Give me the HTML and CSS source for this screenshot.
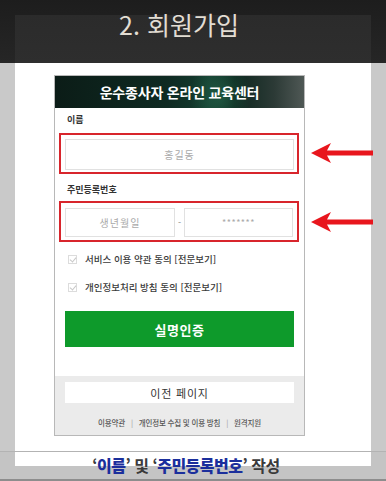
FILE: index.html
```html
<!DOCTYPE html>
<html lang="ko">
<head>
  <meta charset="UTF-8" />
  <meta name="viewport" content="width=device-width, initial-scale=1" />
  <title>2. 회원가입</title>
  <link rel="stylesheet" href="styles.css">
</head>

<body>
  <!-- TITLE BAR -->
  <header class="topbar">
    <h1>2. 회원가입</h1>
  </header>

  <!-- SCREENSHOT SHEET -->
  <main class="sheet">
    <div class="card">
      <div class="card-head">운수종사자 온라인 교육센터</div>

      <form class="card-body">
        <label class="field-label">이름</label>
        <div class="mark">
          <input class="field" type="text" placeholder="홍길동">
        </div>

        <label class="field-label">주민등록번호</label>
        <div class="mark mark-split">
          <input class="field" type="text" placeholder="생년월일">
          <span class="dash">-</span>
          <input class="field field-stars" type="text" placeholder="*******">
        </div>

        <div class="agree"><span class="check"></span>서비스 이용 약관 동의 [전문보기]</div>
        <div class="agree"><span class="check"></span>개인정보처리 방침 동의 [전문보기]</div>

        <button class="btn-verify" type="button">실명인증</button>
      </form>

      <div class="card-foot">
        <button class="btn-prev" type="button">이전 페이지</button>
        <p class="links">이용약관<span class="sep">|</span>개인정보 수집 및 이용 방침<span class="sep">|</span>원격지원</p>
      </div>
    </div>

    <!-- red pointer arrows (drawn over the sheet) -->
    <svg class="arrow arrow-name" width="62" height="20" viewBox="0 0 62 20">
      <polygon points="0,10 20,0 16,7.5 62,7.5 62,12.5 16,12.5 20,20" />
    </svg>
    <svg class="arrow arrow-rrn" width="62" height="20" viewBox="0 0 62 20">
      <polygon points="0,10 20,0 16,7.5 62,7.5 62,12.5 16,12.5 20,20" />
    </svg>
  </main>

  <!-- CAPTION -->
  <footer class="caption">
    <p>‘<b>이름</b>’ 및 ‘<b>주민등록번호</b>’ 작성</p>
  </footer>
</body>
</html>
```

FILE: styles.css
```css
/* ———————————————— */
/* BASE */
/* ———————————————— */
html, body { height: 100%; }
body {
  margin: 0;
  overflow: hidden;
  background: #c9c9c9;
  font-family: "Noto Sans CJK KR", "Noto Sans", sans-serif;
  color: #333;
}

/* ———————————————— */
/* TITLE BAR */
/* ———————————————— */
.topbar {
  height: 63px;
  background:
    linear-gradient(#2b2b2b, #2e2e2e) 15px 15px / 356px 48px no-repeat,
    linear-gradient(#1d1d1d, #262626);
}
.topbar h1 {
  margin: 0;
  padding: 6px 28px 0 0;
  text-align: center;
  font-size: 25px;
  font-weight: 400;
  line-height: 36px;
  color: #e2ddd3;
}

/* ———————————————— */
/* SHEET + CARD */
/* ———————————————— */
.sheet {
  position: relative;
  margin: 0 15px;
  height: 376px;
  padding-top: 12px;
  background: #fff;
}
.card {
  width: 249px;
  margin-left: 39px;
  border: 1px solid #b8b8b8;
}
.card-head {
  height: 32px;
  line-height: 32px;
  text-align: center;
  font-size: 14px;
  font-weight: 700;
  letter-spacing: -0.2px;
  color: #fff;
  background:
    radial-gradient(ellipse 30px 40px at 165px 20px, rgba(40,110,80,0.6), transparent),
    linear-gradient(90deg, #0b1c17 0%, #0f2a22 45%, #143d30 62%, #0c261e 72%, #2c3a36 88%, #4f5855 100%);
}

.card-body {
  padding: 5px 5px 29px 4px;
  margin: 0;
}
.field-label {
  display: block;
  padding-left: 8px;
  font-size: 9px;
  font-weight: 700;
  line-height: 14px;
  margin-bottom: 6px;
  color: #333;
}
.mark + .field-label { margin-top: 9px; margin-bottom: 4px; }

/* red highlight box around inputs */
.mark {
  display: flex;
  align-items: center;
  border: 2px solid #d8252c;
  padding: 4px 3px 2px 4px;
}
.mark-split { padding: 5px 4px 3px 4px; }

.field {
  flex: 1;
  min-width: 0;
  height: 31px;
  box-sizing: border-box;
  border: 1px solid #e1e1e1;
  background: #fff;
  padding: 0;
  text-align: center;
  font-family: inherit;
  font-size: 10px;
  letter-spacing: 1px;
  color: #555;
}
.mark-split .field { height: 29px; }
.mark-split .field:first-child { flex: 0 0 110px; }
.field::placeholder { color: #a9a9a9; }
.field-stars { font-size: 9px; letter-spacing: 0.5px; }
.dash {
  width: 9px;
  text-align: center;
  font-size: 9px;
  color: #888;
}

/* agreement rows */
.agree {
  display: flex;
  align-items: center;
  height: 18px;
  padding-left: 9px;
  margin-top: 8px;
  font-size: 9.5px;
  font-weight: 500;
  color: #3a3a3a;
}
.agree + .agree { margin-top: 10px; }
.check {
  position: relative;
  width: 9px;
  height: 9px;
  margin-right: 8px;
  border: 1px solid #dcdcdc;
  box-sizing: border-box;
}
.check::after {
  content: "";
  position: absolute;
  left: 2px; top: 0;
  width: 3px; height: 5px;
  border: solid #c8c8c8;
  border-width: 0 1px 1px 0;
  transform: rotate(40deg);
}

.btn-verify {
  display: block;
  width: calc(100% - 11px);
  height: 36px;
  margin: 15px 5px 0 6px;
  border: 0;
  background: #0e9a2b;
  color: #fff;
  font-family: inherit;
  font-size: 13px;
  font-weight: 700;
  letter-spacing: 0.5px;
}

/* grey footer */
.card-foot {
  background: #ebebeb;
  padding: 6px 10px 6px;
}
.btn-prev {
  display: block;
  width: 100%;
  height: 21px;
  border: 0;
  background: #fff;
  font-family: inherit;
  font-size: 11px;
  font-weight: 400;
  letter-spacing: 0.8px;
  color: #333;
}
.links {
  margin: 14px 0 0;
  line-height: 12px;
  text-align: center;
  font-size: 7.5px;
  font-weight: 500;
  color: #555;
  letter-spacing: -0.2px;
}
.sep { margin: 0 6px; color: #aaa; }

/* arrows over the sheet */
.arrow {
  position: absolute;
  left: 296px;
  fill: #e8161d;
}
.arrow-name { top: 80px; }
.arrow-rrn { top: 149px; }

/* ———————————————— */
/* CAPTION STRIP */
/* ———————————————— */
.caption {
  height: 27px;
  border-top: 1px solid #b3b3b3;
  border-bottom: 2px solid #8d8d8d;
  background:
    linear-gradient(#fff, #fff) 15px 0 / 356px 14px no-repeat,
    #c4c4c4;
}
.caption p {
  margin: 0;
  padding: 2px 14px 0 0;
  text-align: center;
  font-size: 16px;
  font-weight: 700;
  line-height: 22px;
  letter-spacing: -0.5px;
  color: #3a3a3a;
}
.caption b { color: #1b2f9c; }
```
